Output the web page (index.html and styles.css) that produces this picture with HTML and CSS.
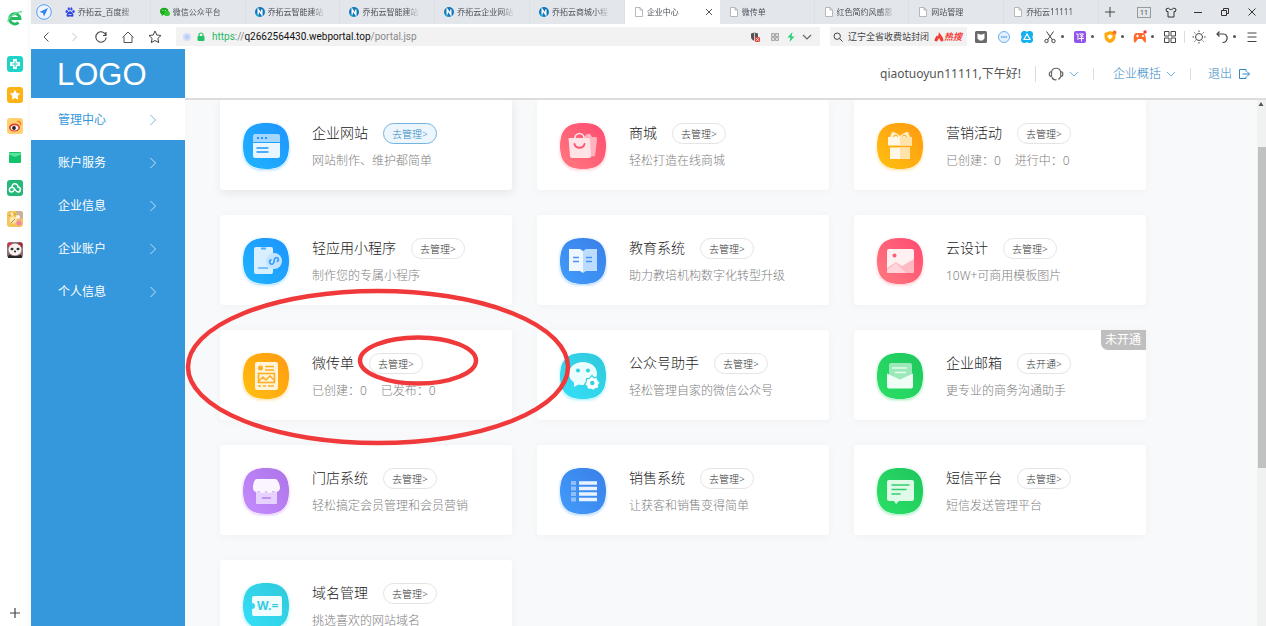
FILE: index.html
```html
<!DOCTYPE html>
<html lang="zh-CN">
<head>
<meta charset="utf-8">
<title>企业中心</title>
<link rel="stylesheet" href="styles.css">
</head>
<body>
<svg class="defs" width="0" height="0" aria-hidden="true">
  <defs>
    <linearGradient id="g-sky" x1="1" y1="0" x2="0" y2="1"><stop offset="0" stop-color="#1e94ff"/><stop offset="1" stop-color="#1fb4ff"/></linearGradient>
    <linearGradient id="g-pink" x1="1" y1="0" x2="0" y2="1"><stop offset="0" stop-color="#ff4a70"/><stop offset="1" stop-color="#ff7a80"/></linearGradient>
    <linearGradient id="g-orange" x1="1" y1="0" x2="0" y2="1"><stop offset="0" stop-color="#ff9a12"/><stop offset="1" stop-color="#ffc010"/></linearGradient>
    <linearGradient id="g-blue" x1="1" y1="0" x2="0" y2="1"><stop offset="0" stop-color="#3a7fe8"/><stop offset="1" stop-color="#419cfb"/></linearGradient>
    <linearGradient id="g-cyan" x1="1" y1="0" x2="0" y2="1"><stop offset="0" stop-color="#2fc8da"/><stop offset="1" stop-color="#35e0f8"/></linearGradient>
    <linearGradient id="g-green" x1="1" y1="0" x2="0" y2="1"><stop offset="0" stop-color="#1fc65e"/><stop offset="1" stop-color="#2be066"/></linearGradient>
    <linearGradient id="g-purple" x1="1" y1="0" x2="0" y2="1"><stop offset="0" stop-color="#ac74e6"/><stop offset="1" stop-color="#c58cff"/></linearGradient>
    <symbol id="tile" viewBox="0 0 46 46"><path d="M23 0C39 0 46 7 46 23S39 46 23 46 0 39 0 23 7 0 23 0Z"/></symbol>
    <symbol id="chev-r" viewBox="0 0 8 12"><path d="M1.500 1 6.500 6l-5 5" fill="none" stroke="currentColor"/></symbol>
    <symbol id="chev-d" viewBox="0 0 10 6"><path d="M1 1l4 4 4-4" fill="none" stroke="currentColor"/></symbol>
    <symbol id="fav-n" viewBox="0 0 10 10"><circle cx="5" cy="5" r="5" fill="#1478b8"/><path d="M3.200 7.500v-5l3.600 5v-5" fill="none" stroke="#fff" stroke-width="1.400"/><path d="M5 10A5 5 0 0 1 .3 6.500l2.500 1z" fill="#25b3d8"/></symbol>
    <symbol id="fav-page" viewBox="0 0 10 10"><path d="M1.500.5h4.500l2.500 2.500v6.500h-7zM6 .5v2.500h2.500" fill="#fff" stroke="#a8a8a8" stroke-width=".8"/></symbol>
  </defs>
</svg>

<aside class="dock">
  <svg class="dock-logo" viewBox="0 0 16 16"><path d="M3.500 8.500h9.500A5.200 5.200 0 1 0 11.500 12.500" fill="none" stroke="#22bd63" stroke-width="2.800"/><path d="M1 12C1 8 8 2 15 1.500" fill="none" stroke="#6bdc93" stroke-width="1.500"/></svg>
  <svg viewBox="0 0 16 16"><rect width="16" height="16" rx="3" fill="#1fd3c8"/><path d="M6 3h4v3h3v4h-3v3H6v-3H3V6h3z" fill="#fff"/><path d="M8 5v6M5 8h6" stroke="#1fd3c8" stroke-width="1"/></svg>
  <svg viewBox="0 0 16 16"><rect width="16" height="16" rx="3" fill="#fdb313"/><path d="M8 2.800l1.600 3.300 3.600.5-2.600 2.500.6 3.600L8 11l-3.200 1.700.6-3.600-2.600-2.500 3.600-.5z" fill="#fff"/></svg>
  <svg viewBox="0 0 16 16"><rect width="16" height="16" rx="3" fill="#ffd06f"/><ellipse cx="7.500" cy="9.500" rx="5.500" ry="4" fill="#e8382e"/><ellipse cx="7.500" cy="9.800" rx="3.800" ry="2.600" fill="#fff"/><circle cx="7" cy="10" r="1.900" fill="#222"/><path d="M10 3.500c2-.6 4 1 3.500 3.500" fill="none" stroke="#ee7a20" stroke-width="1.300"/></svg>
  <svg viewBox="0 0 16 16"><rect x="2" y="3" width="12" height="11" rx="1" fill="#12c36b"/><path d="M2 4h12v1.500L8 8 2 5.500z" fill="#5be39c"/></svg>
  <svg viewBox="0 0 16 16"><rect width="16" height="16" rx="3" fill="#24b978"/><path d="M7.500 9.500c-1 2-2 2.700-3.200 2.500-3-.5-2.300-4.700.7-4.700C4.500 3 10.800 2.500 11 7c3.300.3 3 5 0 5-2.500 0-3-4.500-6-4.700" fill="none" stroke="#fff" stroke-width="1.500"/></svg>
  <svg viewBox="0 0 16 16"><rect width="16" height="16" rx="3" fill="#f3c558"/><path d="M9 0h4a3 3 0 0 1 3 3v4l-5 2z" fill="#c9b09a"/><circle cx="6" cy="9" r="3.500" fill="#fae5b4"/><path d="M2 5c2-3 5-3 7-1M4 12l4-4" stroke="#b98a36" fill="none"/><circle cx="12" cy="12" r="2.500" fill="#ef87a4"/><circle cx="11" cy="6" r="2" fill="#fff2e7"/><circle cx="5" cy="3" r="1.500" fill="#fff2c7"/></svg>
  <svg viewBox="0 0 16 16"><rect width="16" height="16" rx="3" fill="#8d7377"/><circle cx="3" cy="3" r="2.500" fill="#c9394b"/><circle cx="13" cy="3" r="2.500" fill="#9f2c3a"/><ellipse cx="8" cy="7.500" rx="6.500" ry="6" fill="#f6f0ee"/><ellipse cx="5" cy="7" rx="1.500" ry="1.200" fill="#333"/><ellipse cx="11" cy="7" rx="1.500" ry="1.200" fill="#333"/><circle cx="8" cy="9.500" r="1" fill="#222"/><path d="M1 16c0-5 3-3 4-2h6c1-1 4-3 4 2z" fill="#29252a"/></svg>
  <button class="dock-add" aria-label="添加"><svg viewBox="0 0 16 16"><path d="M8 3v10M3 8h10" stroke="#444" stroke-width="1.200"/></svg></button>
</aside>

<div class="browser">
  <div class="tabbar">
    <svg class="brand" viewBox="0 0 16 16"><circle cx="8" cy="8" r="7.300" fill="#eef5ff" stroke="#5b9af0" stroke-width="1"/><path d="M12 4 3.500 8l3.500 1 1 3.500z" fill="#2f83f0"/></svg>
    <nav class="tabs">
      <a class="tab" href="#"><svg viewBox="0 0 10 10" fill="#3245df"><ellipse cx="1.700" cy="4.500" rx="1.200" ry="1.500"/><ellipse cx="3.800" cy="1.900" rx="1.100" ry="1.600"/><ellipse cx="6.400" cy="1.900" rx="1.100" ry="1.600"/><ellipse cx="8.500" cy="4.500" rx="1.200" ry="1.500"/><path d="M5 4.200c1.500 0 3.500 2.500 3.500 4 0 2-2 1.400-3.500 1.400s-3.500.6-3.500-1.400c0-1.500 2-4 3.500-4z"/><path d="M3.500 7.500h3" stroke="#fff" stroke-width=".7"/></svg><span>乔拓云_百度搜</span></a>
      <a class="tab" href="#"><svg viewBox="0 0 10 10"><ellipse cx="4.200" cy="4.200" rx="4.200" ry="3.500" fill="#1aad19"/><ellipse cx="7" cy="6.500" rx="3" ry="2.600" fill="#35c535"/><path d="M2 6l-.5 3L4 7.500z" fill="#1aad19"/><circle cx="3" cy="3.500" r=".5" fill="#fff"/><circle cx="5.500" cy="3.500" r=".5" fill="#fff"/></svg><span>微信公众平台</span></a>
      <a class="tab" href="#"><svg><use href="#fav-n"/></svg><span>乔拓云智能建站</span></a>
      <a class="tab" href="#"><svg><use href="#fav-n"/></svg><span>乔拓云智能建站</span></a>
      <a class="tab" href="#"><svg><use href="#fav-n"/></svg><span>乔拓云企业网站</span></a>
      <a class="tab" href="#"><svg><use href="#fav-n"/></svg><span>乔拓云商城小程</span></a>
      <a class="tab current" href="#"><svg><use href="#fav-page"/></svg><span>企业中心</span><svg class="tab-x" viewBox="0 0 8 8"><path d="M1 1l6 6M7 1 1 7" stroke="#555"/></svg></a>
      <a class="tab" href="#"><svg><use href="#fav-page"/></svg><span>微传单</span></a>
      <a class="tab" href="#"><svg><use href="#fav-page"/></svg><span>红色简约风感恩</span></a>
      <a class="tab" href="#"><svg><use href="#fav-page"/></svg><span>网站管理</span></a>
      <a class="tab" href="#"><svg><use href="#fav-page"/></svg><span>乔拓云11111</span></a>
    </nav>
    <div class="window-tools">
      <button class="new-tab" aria-label="新标签"><svg viewBox="0 0 14 14"><path d="M7 2v10M2 7h10" stroke="#444"/></svg></button>
      <button class="count">11</button>
      <button aria-label="皮肤"><svg viewBox="0 0 14 14"><path d="M4.500 3 2 4l.5 2.500H4V12h6V6.500h1.500L12 4l-2.500-1C9 5 5 5 4.500 3z" fill="none" stroke="#333"/></svg></button>
      <button aria-label="最小化"><svg viewBox="0 0 14 14"><path d="M3 7.500h8" stroke="#333"/></svg></button>
      <button aria-label="还原"><svg viewBox="0 0 14 14"><path d="M3.500 5.500h5v5h-5zM5.500 5V3.500h5v5H9" fill="none" stroke="#333"/></svg></button>
      <button aria-label="关闭"><svg viewBox="0 0 14 14"><path d="M3.500 3.500l7 7M10.500 3.500l-7 7" stroke="#333"/></svg></button>
    </div>
  </div>

  <div class="toolbar">
    <div class="nav-tools">
      <button aria-label="后退"><svg viewBox="0 0 14 14"><path d="M8.500 2.500 4 7l4.500 4.500" fill="none" stroke="#555"/></svg></button>
      <button aria-label="前进"><svg viewBox="0 0 14 14"><path d="M5.500 3l4 4-4 4" fill="none" stroke="#c4c4c4"/></svg></button>
      <button aria-label="刷新"><svg viewBox="0 0 14 14"><path d="M12 5.500A5.200 5.200 0 1 0 12.200 7.500M12 2v3.500H9" fill="none" stroke="#444" stroke-width="1.100"/></svg></button>
      <button aria-label="主页"><svg viewBox="0 0 14 14"><path d="M1.500 7.500 7 2l5.500 5.500M3 6.500v6h8v-6" fill="none" stroke="#555"/></svg></button>
      <button aria-label="收藏"><svg viewBox="0 0 14 14"><path d="M7 1l1.800 4 4.200.5-3.100 2.900.8 4.200L7 10.500l-3.700 2.100.8-4.200L1 5.500 5.200 5z" fill="none" stroke="#444"/></svg></button>
    </div>
    <div class="address">
      <svg viewBox="0 0 10 10"><circle cx="5" cy="5" r="4" fill="#cfdcfa"/><circle cx="5" cy="5" r="2" fill="#b9cbf7"/></svg>
      <svg viewBox="0 0 10 10"><rect x="1.500" y="4" width="7" height="5" rx="1" fill="#23c268"/><path d="M3 4.500V3a2 2 0 0 1 4 0v1.500" fill="none" stroke="#23c268" stroke-width="1.200"/></svg>
      <p class="url"><span class="scheme">https</span><span class="path">://</span>q2662564430.webportal.top<span class="path">/portal.jsp</span></p>
      <svg class="shield" viewBox="0 0 10 10"><path d="M1 1.500 4.500.5 8 1.500V5c0 2-2 3.500-3.500 4C3 8.500 1 7 1 5z" fill="#555"/><path d="M4.500.5V9" stroke="#ccc"/><rect x="5" y="5" width="5" height="5" rx="1" fill="#ea4b4b"/><path d="M6.300 6.300l2.400 2.400m0-2.400L6.300 8.700" stroke="#fff" stroke-width=".8"/></svg>
      <svg class="qr" viewBox="0 0 10 10"><path d="M1.500 1.500h3v3h-3zM5.500 1.500h3v3h-3zM1.500 5.500h3v3h-3zM5.500 5.500h3v3h-3z" fill="#ddd" stroke="#999" stroke-width=".8"/></svg>
      <svg viewBox="0 0 10 10"><path d="M6.500 0 1.500 5.500H4.500L3.500 10l5-5.500H5.500z" fill="#27cf77"/></svg>
      <svg class="drop" viewBox="0 0 10 10"><path d="M1 3l4 4 4-4" fill="none" stroke="#666" stroke-width="1.200"/></svg>
    </div>
    <div class="search">
      <svg viewBox="0 0 10 10"><circle cx="4.200" cy="4.200" r="3.200" fill="none" stroke="#444"/><path d="M6.600 6.600 9.500 9.500" stroke="#444"/></svg>
      <span>辽宁全省收费站封闭</span>
      <svg class="flame" viewBox="0 0 10 10"><path d="M5 0C6 2.500 9.500 4.500 9.500 9L7 9.500 5 6 3 9.500.5 9C.5 6 2 5.500 2.500 3.500L4 4.500z" fill="#f33c38"/></svg>
      <b>热搜</b>
    </div>
    <div class="ext-tools">
      <button aria-label="图库"><svg viewBox="0 0 14 14"><rect x="1" y="1" width="12" height="12" rx="1.500" fill="#696969"/><path d="M3.500 3.500l2.500 1h2l2.500-1v5l-2 2h-3l-2-2z" fill="#fff"/></svg></button>
      <button aria-label="表情"><svg viewBox="0 0 14 14"><circle cx="7" cy="7" r="5.500" fill="#e3f1ff" stroke="#6cb2f2"/><path d="M4 7h6" stroke="#4ca0ed" stroke-width="1.500" stroke-dasharray="1.500 .7"/></svg></button>
      <button aria-label="应用"><svg viewBox="0 0 14 14"><path d="M3 1h2l2 .7L9 1h2l2 2v2l-.7 2 .7 2v2l-2 2H9l-2-.7L5 13H3l-2-2V9l.7-2L1 5V3z" fill="#15b0ee"/><path d="M7 4 4 9.500h6z" fill="none" stroke="#fff" stroke-width="1.200"/></svg></button>
      <button class="more" aria-label="截图"><svg viewBox="0 0 14 14"><path d="M3.500 1.500 9.500 10M10.500 1.500 4.500 10" stroke="#444"/><circle cx="3.500" cy="11" r="1.700" fill="none" stroke="#444"/><circle cx="10.500" cy="11" r="1.700" fill="none" stroke="#444"/></svg></button>
      <button class="more" aria-label="翻译"><svg viewBox="0 0 14 14"><rect x="1" y="1" width="12" height="12" rx="2" fill="#9155ec"/><path d="M3 4h2v6M6.500 4h4l-3 3M6.500 4l4 3M6 8.500h5M8.500 6.500v5" stroke="#fff" fill="none"/></svg></button>
      <button class="more" aria-label="安全"><svg viewBox="0 0 14 14"><path d="M7 1l5.500 2v4c0 3-3 5.500-5.500 6-2.500-.5-5.500-3-5.500-6V3z" fill="#ffab10"/><path d="M4.500 5.500 7 4.500l2.500 1V7L7 9.500 4.500 7z" fill="#fff"/><circle cx="11.500" cy="2.500" r="2" fill="#ff6d25"/></svg></button>
      <button class="more" aria-label="游戏"><svg viewBox="0 0 14 14"><path d="M3 3h7c3 0 3.500 9 2.500 9.500S10 10 9 9H5c-1 1-2.500 4-3.500 3.500S0 3 3 3z" fill="#ff6b2c"/><path d="M3 6h3M4.500 4.500v3" stroke="#fff"/><circle cx="10" cy="6" r="1" fill="#fff"/><circle cx="12" cy="2" r="1.700" fill="#f33c38"/></svg></button>
      <button aria-label="扩展"><svg viewBox="0 0 14 14"><path d="M1.500 1.500h4.500v4.500H1.500zM8 1.500h4.500v4.500H8zM1.500 8h4.500v4.500H1.500zM8 8h4.500v4.500H8z" fill="none" stroke="#444"/></svg></button>
      <i class="rule"></i>
      <button aria-label="亮度"><svg viewBox="0 0 14 14"><circle cx="7" cy="7" r="3.500" fill="none" stroke="#444"/><path d="M7 .5v1.500M7 12v1.500M.5 7H2M12 7h1.500M2.400 2.400l1 1M10.600 10.600l1 1M11.600 2.400l-1 1M3.400 10.600l-1 1" stroke="#444"/></svg></button>
      <button class="more" aria-label="撤销"><svg viewBox="0 0 14 14"><path d="M4.500 1.500 2 4l2.500 2.500M2 4h6.500c5 0 5 8.500-1 8.500" fill="none" stroke="#444" stroke-width="1.200"/></svg></button>
      <button aria-label="菜单"><svg viewBox="0 0 14 14"><path d="M2.500 3h9M2.500 7h9M2.500 11.500h9" stroke="#444"/></svg></button>
    </div>
  </div>

  <div class="page">
    <aside class="sidebar">
      <h1 class="logo">LOGO</h1>
      <nav class="menu">
        <a class="active" href="#">管理中心<svg><use href="#chev-r"/></svg></a>
        <a href="#">账户服务<svg><use href="#chev-r"/></svg></a>
        <a href="#">企业信息<svg><use href="#chev-r"/></svg></a>
        <a href="#">企业账户<svg><use href="#chev-r"/></svg></a>
        <a href="#">个人信息<svg><use href="#chev-r"/></svg></a>
      </nav>
    </aside>

    <div class="workspace">
      <header class="topbar">
        <span class="greeting">qiaotuoyun11111,下午好!</span>
        <button class="service" aria-label="客服"><svg class="headset" viewBox="0 0 16 16"><path d="M3.500 10.500V6a4.700 4.700 0 0 1 9.200 0v4.500M3.500 5.500C.5 5.500.5 10.500 3.500 10.500M12.700 5.500c2.900 0 2.900 5 0 5M4 11c.5 2.300 2.500 3 4.500 2.700M10.500 13.500l2.200-2.500" fill="none" stroke="#666" stroke-width="1.200"/></svg><svg class="chev"><use href="#chev-d"/></svg></button>
        <button class="overview">企业概括<svg class="chev"><use href="#chev-d"/></svg></button>
        <a class="logout" href="#">退出<svg viewBox="0 0 12 12"><path d="M8 3.500V1.500H1.500v9H8v-2M4.500 6h7M9 3.500 11.500 6 9 8.500" fill="none" stroke="currentColor"/></svg></a>
      </header>
      <div class="viewport">
        <main class="cards">
          <article class="card hovered">
            <svg class="app sky" viewBox="0 0 46 46"><use href="#tile" fill="url(#g-sky)"/><path d="M12 11h23a2 2 0 0 1 2 2v6H10v-6a2 2 0 0 1 2-2z" fill="#a5d6ff"/><path d="M10 20h27v13a2 2 0 0 1-2 2H12a2 2 0 0 1-2-2z" fill="#e9f6ff"/><path d="M14 15h2M18 15h2M22 15h2" stroke="#2394ff" stroke-width="2"/><path d="M13.500 25h12M13.500 29h12" stroke="#4aaeff" stroke-width="1.800"/></svg>
            <div class="info"><div class="head"><h2>企业网站</h2><button>去管理&gt;</button></div><p>网站制作、维护都简单</p></div>
          </article>
          <article class="card">
            <svg class="app pink" viewBox="0 0 46 46"><use href="#tile" fill="url(#g-pink)"/><path d="M24 15a5 5 0 0 1 6-4l2 3h4.500L37 17l-2 16-6 1z" fill="#ffb2bd"/><path d="M8.500 15h21.500l1 18a2 2 0 0 1-2 2H12a2 2 0 0 1-2-2z" fill="#ffe3e7"/><path d="M15 16v-1a4.500 4.500 0 0 1 9 0v1" fill="none" stroke="#ffe3e7" stroke-width="1.700"/><path d="M14.500 21c1 5 9 5 10 0" fill="none" stroke="#ff5573" stroke-width="1.800" stroke-linecap="round"/></svg>
            <div class="info"><div class="head"><h2>商城</h2><button>去管理&gt;</button></div><p>轻松打造在线商城</p></div>
          </article>
          <article class="card">
            <svg class="app orange" viewBox="0 0 46 46"><use href="#tile" fill="url(#g-orange)"/><path d="M11 14h24v8.500H11zM13 24.500h20V36H13z" fill="#fff8e7"/><path d="M23 14h12v8.500H23zM23 24.500h10V36H23z" fill="#ffe3ab"/><path d="M15 9c3 0 6 2 8 4 2-2 5-4 8-4l2 5H13z" fill="#ffeec9"/><path d="M16 13.500l3-1.500 2 1.500M30 13.500 27 12l-2 1.500" fill="none" stroke="#ffa514"/></svg>
            <div class="info"><div class="head"><h2>营销活动</h2><button>去管理&gt;</button></div><p class="stats"><span>已创建：0</span><span>进行中：0</span></p></div>
          </article>
          <article class="card">
            <svg class="app sky" viewBox="0 0 46 46"><use href="#tile" fill="url(#g-sky)"/><path d="M13 9h15a2 2 0 0 1 2 2v23a2 2 0 0 1-2 2H13a2 2 0 0 1-2-2V11a2 2 0 0 1 2-2z" fill="#d8efff"/><path d="M18 9.500h5v2h-5z" fill="#4aaaff"/><path d="M15 30h10" stroke="#79c0ff" stroke-width="1.800"/><circle cx="31" cy="23" r="8" fill="#c3e4ff"/><path d="M28.500 21.500c-3.500 1.500-1.500 5.500 1.200 4.500 2.500-1 .5-5 2.500-6 3-1.500 4.500 2.500 1.500 3.800" fill="none" stroke="#379fff" stroke-width="1.700"/></svg>
            <div class="info"><div class="head"><h2>轻应用小程序</h2><button>去管理&gt;</button></div><p>制作您的专属小程序</p></div>
          </article>
          <article class="card">
            <svg class="app blue" viewBox="0 0 46 46"><use href="#tile" fill="url(#g-blue)"/><path d="M9 11h11l3 2v22l-3-2H9z" fill="#eef6ff"/><path d="M37 11H26l-3 2v22l3-2h11z" fill="#bcdcff"/><path d="M13 19.500h6M13 23.500h6M26 19.500h6M26 23.500h6" stroke="#4993f3" stroke-width="1.600"/></svg>
            <div class="info"><div class="head"><h2>教育系统</h2><button>去管理&gt;</button></div><p>助力教培机构数字化转型升级</p></div>
          </article>
          <article class="card">
            <svg class="app pink" viewBox="0 0 46 46"><use href="#tile" fill="url(#g-pink)"/><rect x="10" y="11" width="27" height="24" rx="2" fill="#fff0f2"/><path d="M10 30l9-6 6 4 12-7v12a2 2 0 0 1-2 2H12a2 2 0 0 1-2-2z" fill="#ffb9c2"/><path d="M10 32l9-7 10 10H12a2 2 0 0 1-2-2z" fill="#ffd4da"/><circle cx="17.500" cy="17.500" r="2" fill="#ff5c78"/></svg>
            <div class="info"><div class="head"><h2>云设计</h2><button>去管理&gt;</button></div><p>10W+可商用模板图片</p></div>
          </article>
          <article class="card">
            <svg class="app orange" viewBox="0 0 46 46"><use href="#tile" fill="url(#g-orange)"/><rect x="12" y="9" width="23" height="28" rx="2" fill="#fff3d9"/><circle cx="17.500" cy="15" r="2.500" fill="#ffae24"/><path d="M22 13.500h9M22 17h9M15 33h3M20 33h3M25 33h6" stroke="#ffae24" stroke-width="1.600"/><rect x="15.500" y="20.500" width="16" height="9" fill="none" stroke="#ffae24" stroke-width="1.600"/><path d="M16 28l4-4 3 3 4-4 4 4" fill="none" stroke="#ffae24" stroke-width="1.500"/></svg>
            <div class="info"><div class="head"><h2>微传单</h2><button>去管理&gt;</button></div><p class="stats"><span>已创建：0</span><span>已发布：0</span></p></div>
          </article>
          <article class="card">
            <svg class="app cyan" viewBox="0 0 46 46"><use href="#tile" fill="url(#g-cyan)"/><path d="M23 9c8 0 14 5 14 11.500S31 32 23 32c-2 0-3 0-4.500-.5L14 34v-4.500c-3-2-5-5-5-9C9 14 15 9 23 9z" fill="#ecfdff"/><circle cx="18" cy="17.500" r="2" fill="#32d0e4"/><circle cx="28" cy="17.500" r="2" fill="#32d0e4"/><path d="M32 22.500l2 2.300 3-.3 1 3 2 2-1.500 2.500v3l-3 .5-2 2-3-1.500-3 .3-.7-3-2.300-2 1.700-2.500.3-3 3-.5z" fill="#fff" stroke="#35d5e9" stroke-width="1.200"/><circle cx="32.300" cy="30" r="2.200" fill="#32d0e4"/></svg>
            <div class="info"><div class="head"><h2>公众号助手</h2><button>去管理&gt;</button></div><p>轻松管理自家的微信公众号</p></div>
          </article>
          <article class="card">
            <svg class="app green" viewBox="0 0 46 46"><use href="#tile" fill="url(#g-green)"/><path d="M14 10h19a2 2 0 0 1 2 2v10l-12 5-11-5V12a2 2 0 0 1 2-2z" fill="#9be9b8"/><path d="M15 15h15M18 19.500h11" stroke="#e5fbed" stroke-width="1.700"/><path d="M10 20.500l13 6 13-6v13a2 2 0 0 1-2 2H12a2 2 0 0 1-2-2z" fill="#effdf4"/></svg>
            <div class="info"><div class="head"><h2>企业邮箱</h2><button>去开通&gt;</button></div><p>更专业的商务沟通助手</p></div>
            <span class="badge">未开通</span>
          </article>
          <article class="card">
            <svg class="app purple" viewBox="0 0 46 46"><use href="#tile" fill="url(#g-purple)"/><path d="M13 24h21v11a1 1 0 0 1-1 1H14a1 1 0 0 1-1-1z" fill="#e6d1ff"/><path d="M14 11h18c3 0 5 6 5 9 0 4-5 5-7 3-2 2.500-5 2.500-7 0-2 2.500-5 2.500-7 0-2 2-6 1-6-3 0-3 1-9 4-9z" fill="#faf5ff"/><path d="M19 30h9" stroke="#b67cf0" stroke-width="1.700"/></svg>
            <div class="info"><div class="head"><h2>门店系统</h2><button>去管理&gt;</button></div><p>轻松搞定会员管理和会员营销</p></div>
          </article>
          <article class="card">
            <svg class="app blue" viewBox="0 0 46 46"><use href="#tile" fill="url(#g-blue)"/><path d="M11 15h5M11 20.500h5M11 26h5M11 31.500h5" stroke="#8fbfff" stroke-width="4"/><path d="M19 15h18M19 20.500h18M19 26h18M19 31.500h18" stroke="#e9f3ff" stroke-width="3.500"/></svg>
            <div class="info"><div class="head"><h2>销售系统</h2><button>去管理&gt;</button></div><p>让获客和销售变得简单</p></div>
          </article>
          <article class="card">
            <svg class="app green" viewBox="0 0 46 46"><use href="#tile" fill="url(#g-green)"/><path d="M12 12h23a2 2 0 0 1 2 2v17a2 2 0 0 1-2 2H22l-3 3-2-3h-5a2 2 0 0 1-2-2V14a2 2 0 0 1 2-2z" fill="#dffbe8"/><path d="M14.500 17h18M14.500 21.500h15M14.500 26h9" stroke="#30cf69" stroke-width="1.700"/></svg>
            <div class="info"><div class="head"><h2>短信平台</h2><button>去管理&gt;</button></div><p>短信发送管理平台</p></div>
          </article>
          <article class="card">
            <svg class="app cyan" viewBox="0 0 46 46"><use href="#tile" fill="url(#g-cyan)"/><path d="M11 13h26a2 2 0 0 1 2 2v16a2 2 0 0 1-2 2H11a2 2 0 0 1-2-2v-5a3 3 0 0 0 0-6v-5a2 2 0 0 1 2-2z" fill="#f0fdff"/><text class="domain" x="14" y="27">W.=</text></svg>
            <div class="info"><div class="head"><h2>域名管理</h2><button>去管理&gt;</button></div><p>挑选喜欢的网站域名</p></div>
          </article>
        </main>
        <div class="scrollbar"><svg viewBox="0 0 8 8"><path d="M4 2 6.500 6h-5z" fill="#555"/></svg><i></i></div>
      </div>
    </div>
  </div>
</div>

<svg class="marks" width="400" height="170" viewBox="0 0 400 170" fill="none" stroke="#f0393a" stroke-width="4.500" aria-hidden="true">
  <ellipse cx="198" cy="87" rx="190" ry="76"/>
  <ellipse cx="238" cy="80.500" rx="58" ry="23"/>
</svg>
</body>
</html>
```
FILE: styles.css
```css
* { box-sizing: border-box; }

body {
  margin: 0;
  height: 100vh;
  display: flex;
  overflow: hidden;
  position: relative;
  background: #fff;
  color: #444;
  font: 300 12px/18px "Noto Sans", "Noto Sans CJK SC", sans-serif;
}

h1, h2, p { margin: 0; font-weight: inherit; }
a { color: inherit; text-decoration: none; }
button { margin: 0; padding: 0; border: 0; background: none; color: inherit; font: inherit; }
svg { display: block; flex: none; }
.defs { position: absolute; }

/* side dock */
.dock {
  flex: none;
  width: 31px;
  padding: 10px 0 5px;
  border-right: 4px solid #fbfdfb;
  display: flex;
  flex-direction: column;
  align-items: center;
  gap: 15px;
}
.dock svg { width: 16px; height: 16px; margin-left: 2px; }
.dock .dock-logo { margin-bottom: 15px; }
.dock-add { margin-top: auto; }

.browser { flex: 1; min-width: 0; display: flex; flex-direction: column; }

/* tab strip */
.tabbar { flex: none; display: flex; align-items: center; height: 24px; background: #e3e7ec; }
.brand { width: 16px; height: 16px; margin: 0 4px 0 5px; }
.tabs { flex: 1; min-width: 0; display: flex; align-self: stretch; }
.tab {
  flex: 1 1 9%;
  min-width: 0;
  display: flex;
  align-items: center;
  gap: 3px;
  padding: 0 14px 0 9px;
  border-right: 1px solid #dbe0e5;
  font-size: 8px;
  font-weight: 400;
  line-height: 12px;
  color: #4b5158;
}
.tab svg { width: 10px; height: 10px; }
.tab span {
  flex: 1;
  white-space: nowrap;
  overflow: hidden;
  -webkit-mask-image: linear-gradient(to right, #000 44px, transparent 58px);
  mask-image: linear-gradient(to right, #000 44px, transparent 58px);
}
.tab.current { background: #fff; padding-right: 6px; border-color: #fff; }
.tab .tab-x { width: 8px; height: 8px; }
.window-tools { display: flex; align-items: center; gap: 13px; padding: 0 7px 0 4px; }
.window-tools svg { width: 14px; height: 14px; }
.window-tools .new-tab { margin-right: 7px; }
.window-tools .count { width: 14px; border: 1px solid #999; font-size: 7px; font-weight: 400; line-height: 9px; color: #444; }

/* address row */
.toolbar { flex: none; display: flex; align-items: center; height: 25px; padding-right: 7px; }
.nav-tools { display: flex; gap: 13px; padding: 0 14px 0 9px; }
.toolbar button svg { width: 14px; height: 14px; }
.address, .search { display: flex; align-items: center; height: 19px; background: #f2f2f2; }
.address { flex: 1; min-width: 0; gap: 4px; padding: 0 8px 0 6px; }
.address svg, .search svg { width: 10px; height: 10px; }
.address .shield { margin-right: 6px; }
.address .qr { margin-right: 2px; }
.address .drop { margin-left: 2px; }
.url { flex: 1; padding-left: 2px; font-family: Roboto, "Liberation Sans", sans-serif; font-size: 10px; font-weight: 400; color: #111; }
.scheme { color: #25b765; }
.path { color: #888; }
.search { gap: 5px; margin: 0 7px 0 10px; padding: 0 5px 0 3px; font-size: 9px; font-weight: 400; white-space: nowrap; }
.search .flame { margin-right: -5px; }
.search b { color: #f33c38; font-style: italic; }
.ext-tools { display: flex; align-items: center; gap: 9px; }
.more { display: flex; align-items: center; gap: 4px; }
.more::after { content: ""; width: 3px; height: 3px; border-radius: 50%; background: #555; }
.rule { width: 1px; height: 12px; margin: 0 -2px; background: #ddd; }

/* site */
.page { flex: 1; min-height: 0; display: flex; }
.sidebar { flex: none; width: 154px; background: #3598dc; color: #fff; }
.logo { padding: 2px 0 0 26px; font: 400 31px/47px "Liberation Sans", Arial, sans-serif; }
.menu a { display: flex; align-items: center; justify-content: space-between; height: 43px; padding: 2px 28px 0 27px; font-weight: 400; }
.menu svg { width: 8px; height: 12px; opacity: .7; }
.menu .active { height: 42px; background: #fff; color: #3598dc; }

.workspace { flex: 1; min-width: 0; display: flex; flex-direction: column; }
.topbar {
  flex: none;
  display: flex;
  align-items: center;
  justify-content: flex-end;
  height: 51px;
  padding-right: 16px;
  border-bottom: 2px solid #dcdcdc;
  color: #555;
}
.greeting { font-weight: 400; }
.topbar button, .logout { display: flex; align-items: center; margin-left: 14px; padding-left: 12px; border-left: 1px solid #ddd; line-height: 12px; }
.topbar .overview, .topbar .logout { padding-left: 19px; color: #2f86c4; }
.topbar .logout { padding-left: 17px; }
.headset { width: 16px; height: 16px; }
.topbar .chev { width: 10px; height: 6px; margin-left: 5px; color: #6fb0dd; }
.logout svg { width: 12px; height: 12px; margin-left: 6px; }

.viewport { flex: 1; min-height: 0; display: flex; overflow: hidden; background: #f8f9fa; }
.cards {
  flex: 1;
  align-self: flex-start;
  display: grid;
  grid-template-columns: repeat(3, 1fr);
  gap: 25px;
  padding: 0 111px 25px 35px;
}
.card {
  position: relative;
  display: flex;
  gap: 23px;
  height: 90px;
  padding: 23px 0 0 23px;
  border-radius: 3px;
  background: #fff;
  box-shadow: 0 1px 8px rgba(0, 0, 0, .04);
}
.card.hovered { box-shadow: 1px 3px 10px rgba(0, 0, 0, .08); }
.app { width: 46px; height: 46px; border-radius: 18px; }
.sky { box-shadow: 0 1px 3px #9edaff; }
.pink { box-shadow: 0 1px 3px #ffc3cb; }
.orange { box-shadow: 0 1px 3px #ffdf99; }
.blue { box-shadow: 0 1px 3px #a6cffc; }
.cyan { box-shadow: 0 1px 3px #9eeefa; }
.green { box-shadow: 0 1px 3px #98ebb5; }
.purple { box-shadow: 0 1px 3px #dfc2fb; }
.domain { font: 700 12px "Noto Sans", sans-serif; fill: #32cde0; }

.head { display: flex; align-items: flex-end; gap: 15px; height: 21px; }
.head h2 { font-size: 14px; line-height: 22px; color: #222; }
.head button { height: 21px; padding: 0 8px; border: 1px solid #e4e4e4; border-radius: 11px; font-size: 10px; line-height: 18px; color: #333; }
.head h2, .head button { flex: none; }
.hovered .head button { border-color: #72b3e0; background: #edf6fd; color: #2f86c4; }
.info p { margin-top: 8px; color: #808080; white-space: nowrap; }
.stats { display: flex; gap: 14px; }
.badge { position: absolute; top: 0; right: 0; padding: 1px 5px 1px 4px; border-bottom-left-radius: 7px; background: #bfbfbf; color: #fff; font-weight: 400; }

.scrollbar { flex: none; width: 9px; background: #f1f1f1; }
.scrollbar svg { width: 8px; height: 8px; }
.scrollbar i { display: block; height: 61%; margin: 39px 0 0 1px; background: #c1c1c1; }

/* hand-drawn highlight over the cards */
.marks { position: absolute; left: 180px; top: 280px; pointer-events: none; }
```
